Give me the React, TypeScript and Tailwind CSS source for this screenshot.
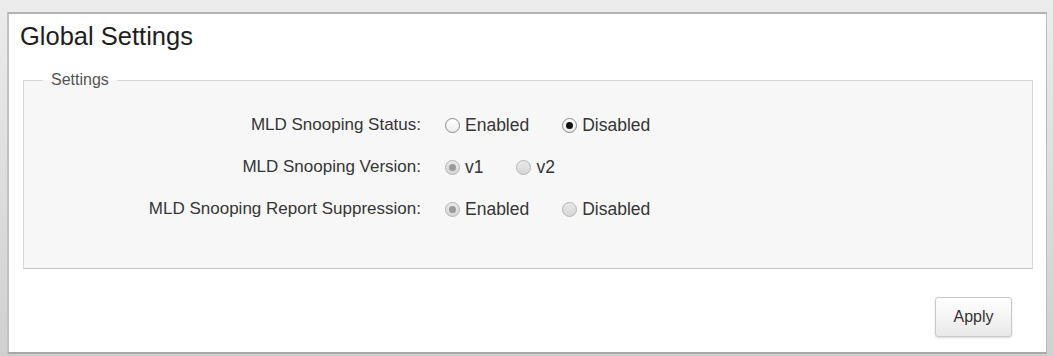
import React from 'react';

type Opt = { label: string; checked: boolean };

interface RowProps {
    label: string;
    options: Opt[];
    disabled?: boolean;
}

function Radio({ checked, disabled }: { checked: boolean; disabled?: boolean }) {
    const ring = disabled
        ? 'border-[#b3b3b3] bg-gradient-to-b from-[#e9e9e9] to-[#d6d6d6]'
        : 'border-[#8a8a8a] bg-gradient-to-b from-white to-[#ececec]';
    const dot = disabled ? 'bg-[#9a9a9a]' : 'bg-[#111]';
    return (
        <span className={`w-[15px] h-[15px] rounded-full border flex items-center justify-center shrink-0 ${ring}`}>
            {checked && <span className={`w-[7px] h-[7px] rounded-full ${dot}`} />}
        </span>
    );
}

function SettingRow({ label, options, disabled }: RowProps) {
    return (
        <div className="flex items-center h-[42px]">
            <div className="w-[397px] text-right text-[17px] text-[#363636]">{label}</div>
            <div className="flex items-center gap-[33px] ml-[24px]">
                {options.map(o => (
                    <label key={o.label} className="flex items-center gap-[5px] text-[17.5px] text-[#363636]">
                        <Radio checked={o.checked} disabled={disabled} />
                        <span>{o.label}</span>
                    </label>
                ))}
            </div>
        </div>
    );
}

export default function App() {
    return (
        <div
            className="w-[1053px] h-[356px] bg-gradient-to-b from-[#ececec] to-[#d0d0d0] pt-[12px] pl-[7px] pr-[6px] pb-[2px]"
            style={{ fontFamily: '"Liberation Sans", Arial, sans-serif' }}
        >
            <div className="h-full bg-white border-t-2 border-l-2 border-r border-b-2 border-t-[#b3b3b3] border-l-[#c2c2c2] border-r-[#bdbdbd] border-b-[#a8a8a8] flex flex-col">
                <h1 className="pl-[11px] pt-[8px] text-[25.5px] leading-[29px] text-[#1e1e1e]">Global Settings</h1>

                <fieldset className="mt-[20px] ml-[14px] mr-[13px] border border-[#d6d6d6] border-b-[#c4c4c4] bg-[#f7f7f7] pt-[15px] pb-[38px]">
                    <legend className="ml-[19px] px-[8px] text-[16px] leading-[18px] text-[#555]">Settings</legend>
                    <SettingRow
                        label="MLD Snooping Status:"
                        options={[
                            { label: 'Enabled', checked: false },
                            { label: 'Disabled', checked: true },
                        ]}
                    />
                    <SettingRow
                        label="MLD Snooping Version:"
                        disabled
                        options={[
                            { label: 'v1', checked: true },
                            { label: 'v2', checked: false },
                        ]}
                    />
                    <SettingRow
                        label="MLD Snooping Report Suppression:"
                        disabled
                        options={[
                            { label: 'Enabled', checked: true },
                            { label: 'Disabled', checked: false },
                        ]}
                    />
                </fieldset>

                <div className="flex justify-end mt-[28px] pr-[34px]">
                    <button className="w-[77px] h-[40px] rounded-[3px] border border-[#c9c9c9] bg-gradient-to-b from-white to-[#e9e9e9] shadow-[0_1px_2px_rgba(0,0,0,0.15)] text-[16px] text-[#333]">
                        Apply
                    </button>
                </div>
            </div>
        </div>
    );
}
